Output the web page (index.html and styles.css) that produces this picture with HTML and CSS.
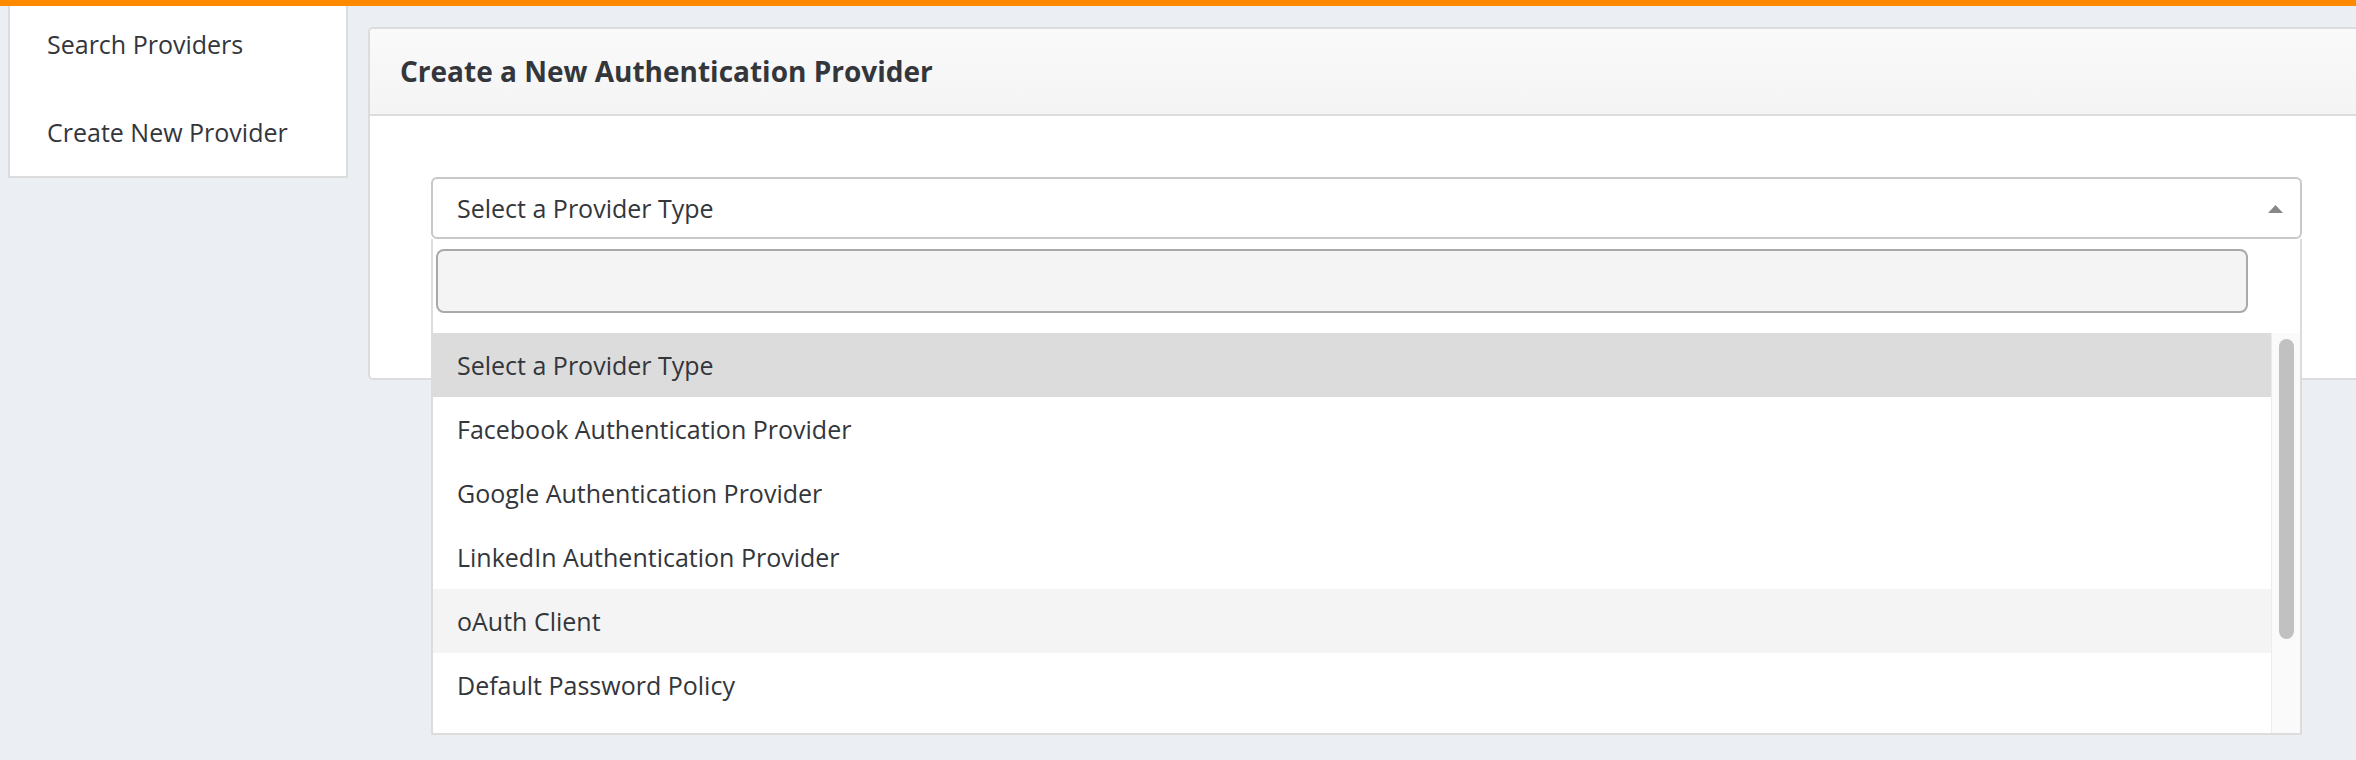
FILE: index.html
```html
<!DOCTYPE html>
<html>

<head>
  <meta charset="UTF-8">
  <meta name="viewport" content="width=device-width, initial-scale=1" />
  <title>Authentication Providers</title>
  <link rel="stylesheet" href="styles.css">
</head>

<body>
  <div class="top-bar"></div>

  <div class="layout">
    <nav class="side-nav">
      <a class="side-nav-item" href="#">Search Providers</a>
      <a class="side-nav-item" href="#">Create New Provider</a>
    </nav>

    <section class="panel">
      <div class="panel-header">
        <h2>Create a New Authentication Provider</h2>
      </div>

      <div class="panel-body">
        <div class="select">
          <div class="select-box">
            <span>Select a Provider Type</span>
            <svg class="select-arrow" viewBox="0 0 15 8" width="15" height="8">
              <polygon points="7.5,0 15,8 0,8" />
            </svg>
          </div>

          <div class="select-dropdown">
            <input class="select-search" type="text">

            <div class="select-results">
              <ul class="select-options">
                <li class="selected">Select a Provider Type</li>
                <li>Facebook Authentication Provider</li>
                <li>Google Authentication Provider</li>
                <li>LinkedIn Authentication Provider</li>
                <li class="hover">oAuth Client</li>
                <li>Default Password Policy</li>
              </ul>

              <!-- drawn scrollbar, the list is scrolled to the top -->
              <div class="scrollbar">
                <div class="scrollbar-thumb"></div>
              </div>
            </div>
          </div>
        </div>
      </div>
    </section>
  </div>
</body>

</html>
```
FILE: styles.css
```css
:root {
  --color-text: #33363b;
  --color-bg: #ebeef2;
  --color-accent: #ff8a00;
  --color-border: #dcdcdc;
  --color-select-border: #c8c8c8;
  --color-option-selected: #dcdcdc;
  --color-option-hover: #f4f4f4;
  --font-size: 25px;
}

* {
  margin: 0;
  padding: 0;
  box-sizing: border-box;
}

body {
  height: 100vh;
  overflow: hidden;
  background-color: var(--color-bg);
  color: var(--color-text);
  font-family: "Open Sans", "Noto Sans", sans-serif;
  font-size: var(--font-size);
}

/* fixed orange strip over the top of the page */
.top-bar {
  position: fixed;
  top: 0;
  left: 0;
  right: 0;
  z-index: 10;
  height: 6px;
  background-color: var(--color-accent);
}

.layout {
  padding-left: 8px;

  display: flex;
  align-items: flex-start;
  gap: 20px;
}

.side-nav {
  flex-shrink: 0;
  width: 340px;
  background-color: white;
  border: 2px solid var(--color-border);
  border-top: none;

  display: flex;
  flex-direction: column;
}

.side-nav-item {
  height: 88px;
  padding-left: 37px;
  color: var(--color-text);
  text-decoration: none;

  display: flex;
  align-items: center;
}

.panel {
  flex: 1;
  margin-top: 27px;
  margin-right: -9px;
  background-color: white;
  border: 2px solid var(--color-border);
  border-radius: 5px;
}

.panel-header {
  height: 87px;
  padding: 0 30px 2px;
  border-bottom: 2px solid var(--color-border);
  border-radius: 5px 5px 0 0;
  background: linear-gradient(#fafafa, #f4f4f4);

  display: flex;
  align-items: center;

  h2 {
    font-size: 28px;
    font-weight: 700;
    color: var(--color-text);
  }
}

.panel-body {
  padding: 61px 61px 139px;
}

.select {
  position: relative;
}

.select-box {
  height: 62px;
  padding: 0 17px 0 24px;
  border: 2px solid var(--color-select-border);
  border-radius: 6px;
  background-color: white;

  display: flex;
  align-items: center;
  justify-content: space-between;

  .select-arrow {
    margin-top: 2px;
    fill: #888;
  }
}

.select-dropdown {
  position: absolute;
  top: 100%;
  left: 0;
  right: 0;
  z-index: 5;

  background-color: white;
  border: 2px solid var(--color-border);
  border-top: none;
}

.select-search {
  display: block;
  width: calc(100% - 55px);
  height: 64px;
  margin: 10px 0 20px 3px;
  background-color: #f4f4f4;
  border: 2px solid #a9a9a9;
  border-radius: 8px;
  outline: none;
}

.select-results {
  height: 400px;

  display: flex;
}

.select-options {
  flex: 1;
  overflow: hidden;
  list-style: none;

  li {
    height: 64px;
    padding: 0 24px;

    display: flex;
    align-items: center;
  }

  li.selected {
    background-color: var(--color-option-selected);
  }

  li.hover {
    background-color: var(--color-option-hover);
  }
}

.scrollbar {
  flex-shrink: 0;
  width: 29px;
  padding: 6px 6px 0 7px;
  background-color: #fafafa;
  border-left: 1px solid #ececec;

  .scrollbar-thumb {
    height: 300px;
    background-color: #c1c1c1;
    border-radius: 8px;
  }
}
```
